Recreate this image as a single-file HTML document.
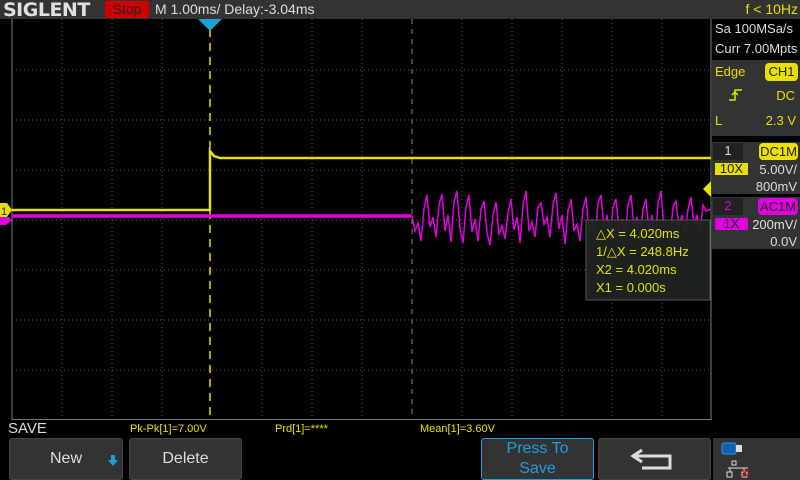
<!DOCTYPE html>
<html><head><meta charset="utf-8"><style>
*{margin:0;padding:0;box-sizing:border-box}
body{width:800px;height:480px;background:#000;position:relative;overflow:hidden;font-family:"Liberation Sans",sans-serif}
.a{position:absolute}
.btn{position:absolute;top:438px;height:42px;background:#333;border:1px solid #444;border-radius:3px;color:#ddd;font-size:16px;display:flex;align-items:center;justify-content:center}
.y{color:#e8e000}
</style></head><body>
<div class="a" style="left:0;top:0;width:800px;height:19px;background:#333"></div>
<div class="a" style="left:3px;top:-1px;color:#e0e0e0;font-size:19px;font-weight:bold;letter-spacing:-0.5px;font-family:'DejaVu Sans',sans-serif">SIGLENT</div>
<div class="a" style="left:105px;top:1px;width:44px;height:17px;background:#d00000;color:#222;font-size:14px;text-align:center;line-height:17px">Stop</div>
<div class="a" style="left:155px;top:1px;color:#ddd;font-size:14px">M 1.00ms/ Delay:-3.04ms</div>
<div class="a y" style="right:2px;top:1px;font-size:14px">f &lt; 10Hz</div>
<div class="a" style="left:712px;top:19px;width:88px;height:41px;background:#000;color:#ddd;font-size:13px;line-height:20px;padding-left:3px">Sa 100MSa/s<br>Curr 7.00Mpts</div>
<div class="a" style="left:712px;top:60px;width:88px;height:76px;background:#333"></div>
<div class="a y" style="left:715px;top:64px;font-size:13px">Edge</div>
<div class="a" style="left:765px;top:63px;width:33px;height:18px;background:#e8e000;border-radius:4px;color:#222;font-size:13px;text-align:center;line-height:18px">CH1</div>
<svg class="a" style="left:728px;top:88px" width="16" height="14"><path d="M1 12H7V2H14M4 7L7 4L10 7" stroke="#e8e000" fill="none" stroke-width="1.5"/></svg>
<div class="a y" style="right:5px;top:88px;font-size:13px">DC</div>
<div class="a y" style="left:715px;top:113px;font-size:13px">L</div>
<div class="a y" style="right:4px;top:113px;font-size:13px">2.3 V</div>
<div class="a" style="left:712px;top:142px;width:88px;height:52px;background:#333"></div>
<div class="a" style="left:713px;top:143px;width:30px;height:17px;background:#222;color:#ddd;font-size:13px;text-align:center">1</div>
<div class="a" style="left:759px;top:143px;width:39px;height:17px;background:#e8e000;border-radius:4px;color:#222;font-size:13px;text-align:center;line-height:17px">DC1M</div>
<div class="a" style="left:715px;top:163px;width:33px;height:12px;background:#e8e000;color:#222;font-size:13px;line-height:12px;text-align:center">10X</div>
<div class="a" style="right:3px;top:161px;color:#ddd;font-size:13px;text-align:right;line-height:17px">5.00V/<br>800mV</div>
<div class="a" style="left:712px;top:197px;width:88px;height:52px;background:#333"></div>
<div class="a" style="left:713px;top:198px;width:30px;height:17px;background:#222;color:#e000e0;font-size:13px;text-align:center">2</div>
<div class="a" style="left:758px;top:198px;width:40px;height:17px;background:#e000e0;border-radius:4px;color:#222;font-size:13px;text-align:center;line-height:17px">AC1M</div>
<div class="a" style="left:715px;top:218px;width:33px;height:12px;background:#e000e0;color:#222;font-size:13px;line-height:12px;text-align:center">1X</div>
<div class="a" style="right:3px;top:216px;color:#ddd;font-size:13px;text-align:right;line-height:17px">200mV/<br>0.0V</div>
<svg class="a" style="left:0;top:19px" width="712" height="402">
<g stroke="#555" stroke-dasharray="1,3" stroke-width="1">
<path d="M62 0V401M112 0V401M162 0V401M262 0V401M312 0V401M362 0V401M462 0V401M512 0V401M562 0V401M612 0V401M662 0V401"/>
<path d="M12 51H711M12 101H711M12 151H711M12 201H711M12 251H711M12 301H711M12 351H711"/>
</g>
<path d="M12 0V401M12 400.5H711M711 0V401" stroke="#777" fill="none"/>
<path d="M412 0V401" stroke="#888" stroke-dasharray="5,5"/>
<path d="M210 10V401" stroke="#e8e000" stroke-dasharray="8,6" stroke-width="1.5"/>
<path d="M198 0H222L210 12Z" fill="#1ea0d8"/>
<path d="M12 191H210V132L214 137L220 139H711" stroke="#e8e000" stroke-width="2.5" fill="none"/>
<path d="M12 197H412" stroke="#e000e0" stroke-width="3.5"/>
<path d="M412 197L415 212L418 204L421 222L424 190L427 176L430 208L433 198L436 218L439 186L442 175L445 212L448 196L451 223L454 183L457 172L460 210L463 224L466 188L469 176L472 213L475 200L478 222L481 190L484 182L487 214L490 226L493 196L496 183L499 216L502 206L505 220L508 194L511 180L514 211L517 198L520 224L523 186L526 172L529 212L532 203L535 218L538 188L541 184L544 206L547 198L550 218L553 186L556 174L559 210L562 196L565 225L568 192L571 180L574 212L577 205L580 222L583 190L586 178L589 213L592 200L595 219L598 184L601 176L604 210L607 196L610 222L613 188L616 180L619 212L622 200L625 218L628 186L631 176L634 208L637 198L640 222L643 190L646 180L649 214L652 196L655 224L658 184L661 172L664 210L667 203L670 220L673 188L676 182L679 208L682 196L685 216L688 190L691 178L694 206L697 196L700 214L703 186L706 192L711 190" stroke="#e000e0" stroke-width="1.5" fill="none"/>
<rect x="586" y="201" width="124" height="80" fill="#202420" fill-opacity="0.95" stroke="#555"/>
<text x="596" y="219" fill="#e8e000" font-size="13" font-family="Liberation Sans">△X = 4.020ms</text>
<text x="596" y="237" fill="#e8e000" font-size="13" font-family="Liberation Sans">1/△X = 248.8Hz</text>
<text x="596" y="255" fill="#e8e000" font-size="13" font-family="Liberation Sans">X2 = 4.020ms</text>
<text x="596" y="273" fill="#e8e000" font-size="13" font-family="Liberation Sans">X1 = 0.000s</text>
<path d="M711 162L703 170L711 178Z" fill="#e8e000"/>
</g>
</svg>
<svg class="a" style="left:0;top:203px" width="14" height="22"><path d="M0 0H7L12 7L7 14H0Z" fill="#e8e000"/><text x="1" y="12" font-size="11" fill="#222" font-family="Liberation Sans">1</text><path d="M0 14H9L12 17L6 22H0Z" fill="#e000e0"/></svg>
<div class="a" style="left:8px;top:420px;color:#ddd;font-size:15px">SAVE</div>
<div class="a y" style="left:130px;top:423px;font-size:11px">Pk-Pk[1]=7.00V</div>
<div class="a y" style="left:275px;top:423px;font-size:11px">Prd[1]=****</div>
<div class="a y" style="left:420px;top:423px;font-size:11px">Mean[1]=3.60V</div>
<div class="btn" style="left:9px;width:114px">New</div>
<svg class="a" style="left:108px;top:455px" width="10" height="12"><path d="M3 0H7V5H10L5 11L0 5H3Z" fill="#1ea0d8"/></svg>
<div class="btn" style="left:129px;width:113px">Delete</div>
<div class="btn" style="left:481px;width:113px;border-color:#1ea0d8;color:#1ea0d8;line-height:20px;text-align:center">Press To<br>Save</div>
<div class="btn" style="left:598px;width:113px"></div>
<svg class="a" style="left:630px;top:448px" width="50" height="24"><path d="M12 2L3 8L12 14M3 8H40V20H12" stroke="#ddd" stroke-width="3" fill="none"/></svg>
<div class="a" style="left:713px;top:438px;width:87px;height:42px;background:#333"></div>
<svg class="a" style="left:720px;top:441px" width="32" height="38"><rect x="2" y="2" width="14" height="11" rx="2" fill="#1060b0" stroke="#3090f0"/><rect x="16" y="4" width="6" height="7" fill="#ddd"/><path d="M12 20h4v4h-4zM8 27H28M10 27v4M24 27v4M7 31h5v5h-5zM22 31h5v5h-5z" stroke="#ddd" fill="none"/><path d="M22 28L28 36M28 28L22 36" stroke="#e00"/></svg>
</body></html>
